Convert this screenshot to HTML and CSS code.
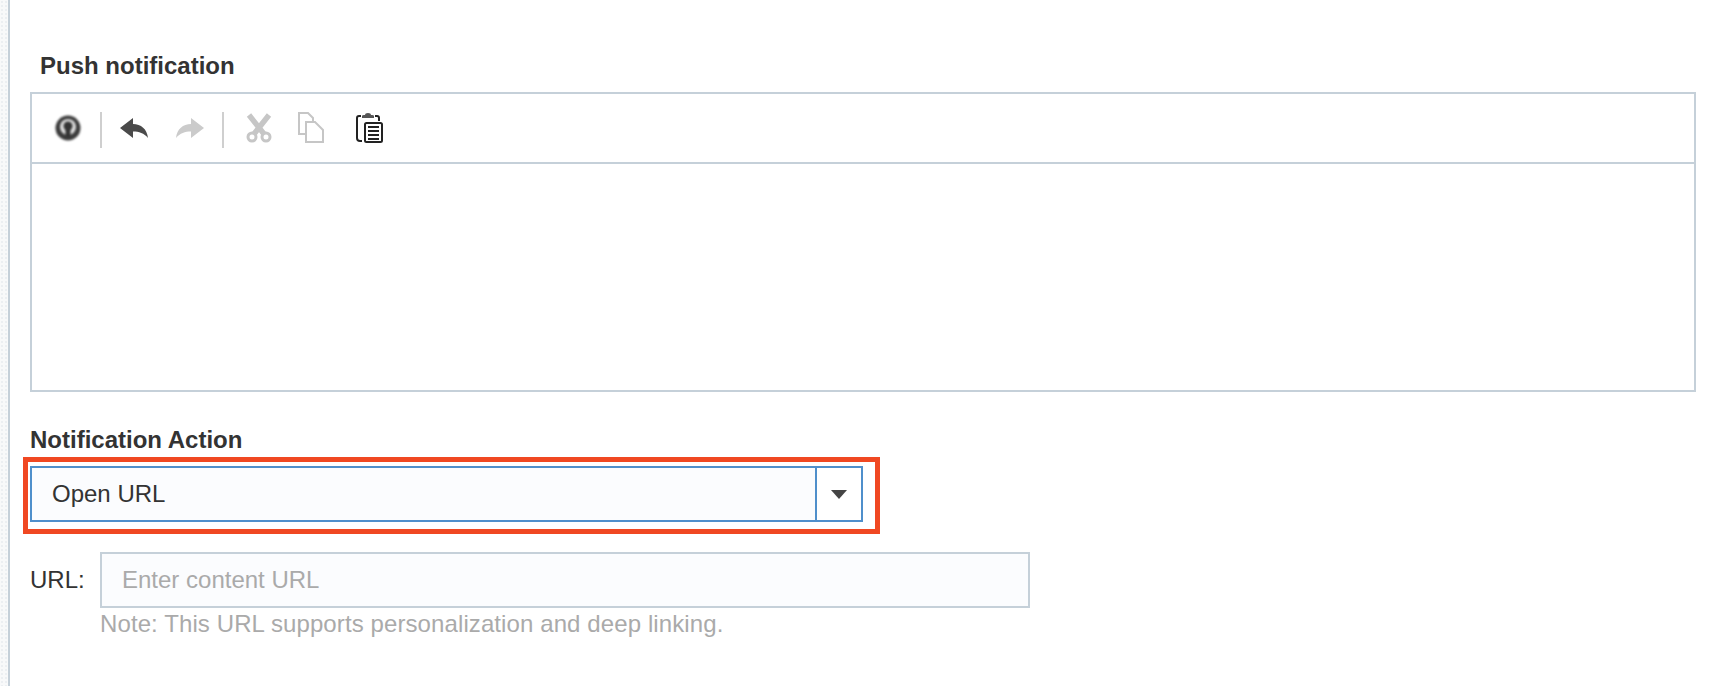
FILE: index.html
```html
<!DOCTYPE html>
<html lang="en">
<head>
  <meta charset="UTF-8">
  <title>Push notification</title>
  <link rel="stylesheet" href="styles.css">
</head>
<body>
  <div class="strip"></div>
  <div class="content">
    <h2 class="editor-title">Push notification</h2>

    <div class="editor">
      <div class="toolbar">
        <svg class="icon icon-source" width="28" height="28" viewBox="0 0 28 28">
          <circle cx="14" cy="14" r="12.500" fill="#3c3c3c"/>
          <circle cx="14" cy="13" r="8" fill="#ddd"/>
          <circle cx="14" cy="12" r="4.500" fill="#333"/>
          <rect x="11.500" y="13" width="5" height="10" fill="#333"/>
        </svg>
        <span class="sep"></span>
        <svg class="icon icon-undo" width="30" height="24" viewBox="0 0 30 24">
          <path d="M1 11 L14 1 V7 C22 7 28 12 29 21 C25 16 20 14.500 14 14.500 V21 Z" fill="#4a4a4a"/>
        </svg>
        <svg class="icon icon-redo" width="30" height="24" viewBox="0 0 30 24">
          <path d="M29 11 L16 1 V7 C8 7 2 12 1 21 C5 16 10 14.500 16 14.500 V21 Z" fill="#cbcbcb"/>
        </svg>
        <span class="sep sep-second"></span>
        <svg class="icon icon-cut" width="28" height="32" viewBox="0 0 28 32">
          <path d="M4 3 L19 22 M24 3 L9 22" fill="none" stroke="#c6c6c6" stroke-width="5.500"/>
          <circle cx="7" cy="25" r="4" fill="#fff" stroke="#c6c6c6" stroke-width="3"/>
          <circle cx="21" cy="25" r="4" fill="#fff" stroke="#c6c6c6" stroke-width="3"/>
        </svg>
        <svg class="icon icon-copy" width="28" height="32" viewBox="0 0 28 32">
          <path d="M8 22 H2 V1 H11 L16 6 V9" fill="none" stroke="#c6c6c6" stroke-width="2"/>
          <path d="M9 10 H18 L26 18 V30 H9 Z" fill="none" stroke="#c6c6c6" stroke-width="2"/>
        </svg>
        <svg class="icon icon-paste" width="28" height="32" viewBox="0 0 28 32">
          <path d="M6 4 H4 Q2 4 2 6 V26 Q2 29 5 29 H7 M20 4 H22 Q24 4 24 6 V9" fill="none" stroke="#222" stroke-width="2"/>
          <path d="M7 6 V4 Q7 3 9 3 H10 Q10 1 13 1 Q16 1 16 3 H17 Q19 3 19 4 V6 Z" fill="#555"/>
          <rect x="10" y="11" width="17" height="19" rx="1.500" fill="#fff" stroke="#222" stroke-width="2"/>
          <path d="M13 15 H24 M13 19 H24 M13 23 H24 M13 27 H24" stroke="#222" stroke-width="2"/>
        </svg>
      </div>
      <div class="editor-body"></div>
    </div>

    <label class="field-title">Notification Action</label>
    <div class="select-wrap">
      <div class="select">
        <span class="select-value">Open URL</span>
        <span class="select-btn"><span class="caret"></span></span>
      </div>
      <div class="highlight"></div>
    </div>

    <div class="url-row">
      <label class="url-label">URL:</label>
      <div class="url-field">
        <div class="url-input">Enter content URL</div>
        <p class="note">Note: This URL supports personalization and deep linking.</p>
      </div>
    </div>
  </div>
</body>
</html>
```

FILE: styles.css
```css
* {
    box-sizing: border-box;
    font-family: "Liberation Sans", Arial, Helvetica, sans-serif;
}

html, body {
    height: 100%;
}

body {
    margin: 0;
    background-color: #fff;
    display: flex;
    overflow: hidden;
}

.strip {
    width: 10px;
    flex: none;
    border-right: 2px solid #c5d0d9;
    background-color: #f8f9fa;
    background-image: radial-gradient(#eceff2 1px, transparent 1px);
    background-size: 4px 4px;
}

.content {
    flex: 1;
    padding: 53px 20px 0 20px;
}

.editor-title {
    margin: 0 0 0 10px;
    font-size: 24px;
    line-height: 26px;
    font-weight: bold;
    color: #333;
}

.editor {
    margin-top: 13px;
    border: 2px solid #c5d0d9;
    height: 300px;
    display: flex;
    flex-direction: column;
}

.toolbar {
    height: 70px;
    flex: none;
    border-bottom: 2px solid #c5d0d9;
    display: flex;
    align-items: center;
    padding-left: 22px;
}

.icon {
    flex: none;
    display: block;
}

.icon-source {
    filter: blur(1px);
}

.sep {
    width: 2px;
    height: 36px;
    background-color: #cfcfcf;
    margin: 3px 17px 0 18px;
}

.icon-undo, .icon-redo {
    margin-top: 2px;
}

.icon-redo {
    margin-left: 26px;
}

.sep-second {
    margin: 3px 21px 0 17px;
}

.icon-copy {
    margin-left: 24px;
}

.icon-paste {
    margin-left: 30px;
}

.editor-body {
    flex: 1;
}

.field-title {
    display: block;
    margin-top: 35px;
    font-size: 24px;
    line-height: 26px;
    font-weight: bold;
    color: #333;
}

.select-wrap {
    position: relative;
    width: 833px;
    margin-top: 13px;
}

.select {
    height: 56px;
    border: 2px solid #4f8fcb;
    display: flex;
    align-items: center;
    background-color: #fbfcfe;
}

.select-value {
    flex: 1;
    padding-left: 20px;
    font-size: 24px;
    color: #333;
}

.select-btn {
    width: 46px;
    height: 100%;
    border-left: 2px solid #4f8fcb;
    background-color: #fff;
    display: flex;
    align-items: center;
    justify-content: center;
}

.caret {
    width: 0;
    height: 0;
    border-left: 8px solid transparent;
    border-right: 8px solid transparent;
    border-top: 9px solid #444;
}

.highlight {
    position: absolute;
    left: -7px;
    top: -9px;
    width: 857px;
    height: 77px;
    border: 5px solid #f04822;
}

.url-row {
    display: flex;
    margin-top: 30px;
}

.url-label {
    width: 70px;
    font-size: 24px;
    line-height: 56px;
    color: #333;
}

.url-field {
    width: 930px;
}

.url-input {
    height: 56px;
    border: 2px solid #c5d0d9;
    background-color: #fbfcfe;
    padding-left: 20px;
    font-size: 24px;
    line-height: 52px;
    color: #aaa;
}

.note {
    margin: 3px 0 0 0;
    font-size: 24px;
    line-height: 26px;
    letter-spacing: 0.1px;
    color: #aaa;
}
```
